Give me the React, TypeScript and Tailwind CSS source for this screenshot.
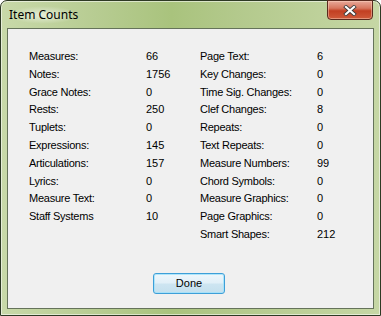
const left: [string, string][] = [
  ["Measures:", "66"],
  ["Notes:", "1756"],
  ["Grace Notes:", "0"],
  ["Rests:", "250"],
  ["Tuplets:", "0"],
  ["Expressions:", "145"],
  ["Articulations:", "157"],
  ["Lyrics:", "0"],
  ["Measure Text:", "0"],
  ["Staff Systems", "10"],
];

const right: [string, string][] = [
  ["Page Text:", "6"],
  ["Key Changes:", "0"],
  ["Time Sig. Changes:", "0"],
  ["Clef Changes:", "8"],
  ["Repeats:", "0"],
  ["Text Repeats:", "0"],
  ["Measure Numbers:", "99"],
  ["Chord Symbols:", "0"],
  ["Measure Graphics:", "0"],
  ["Page Graphics:", "0"],
  ["Smart Shapes:", "212"],
];

function Column({ rows }: { rows: [string, string][] }) {
  return (
    <div className="flex w-[171px] flex-col">
      {rows.map(([label, value]) => (
        <div key={label} className="flex h-[17.8px] items-center leading-[17.8px]">
          <span className="w-[117px] whitespace-nowrap tracking-[-0.25px]">{label}</span>
          <span>{value}</span>
        </div>
      ))}
    </div>
  );
}

function CloseButton() {
  return (
    <div className="absolute left-[326px] top-[-1px] flex h-[20px] w-[46px] items-center justify-center rounded-b-[4px] border border-[#5a2a1e] bg-[linear-gradient(180deg,#e8a99a_0%,#d7765e_40%,#c23f22_55%,#cf5a3a_100%)] shadow-[inset_0_0_0_1px_rgba(255,220,200,0.45)]">
      <svg width="14" height="11" viewBox="0 0 14 11">
        <path d="M3 2 L11 9 M11 2 L3 9" stroke="#3b3b3b" strokeWidth="3.8" strokeLinecap="square" />
        <path d="M3 2 L11 9 M11 2 L3 9" stroke="#ffffff" strokeWidth="2.2" strokeLinecap="square" />
      </svg>
    </div>
  );
}

export default function App() {
  return (
    <div className="h-[316px] w-[381px] font-['Liberation_Sans',Arial,sans-serif] text-[11px] text-black">
      <div className="relative flex h-full w-full flex-col rounded-t-[7px] border border-[#2e3a24] bg-[linear-gradient(90deg,#c8d9a9_0%,#b7cc92_25%,#a9c37d_45%,#b3c98c_62%,#c6d7a5_100%)] px-[6px] pb-[6px] shadow-[inset_0_0_0_1px_rgba(255,255,255,0.55)]">
        <div className="flex h-[27px] items-center pl-[1px] pt-[1px]">
          <span className="rounded-full bg-[radial-gradient(ellipse_at_center,rgba(255,255,255,0.6)_0%,rgba(255,255,255,0)_70%)] px-[1px] font-['Noto_Sans',sans-serif] text-[12px] text-black">
            Item Counts
          </span>
        </div>
        <CloseButton />
        <div className="flex flex-1 flex-col border border-[#65735a] bg-[#f0f0f0]">
          <div className="flex pl-[21px] pt-[19px]">
            <Column rows={left} />
            <Column rows={right} />
          </div>
          <div className="mt-auto pb-[14px] pl-[145px]">
            <button className="flex h-[21px] w-[72px] items-center justify-center rounded-[3px] border border-[#3d9fd8] bg-[linear-gradient(180deg,#eef7fc_0%,#e2f0f8_45%,#cde5f1_55%,#c4e0ee_100%)] shadow-[inset_0_0_0_1px_rgba(160,225,250,0.8)]">
              Done
            </button>
          </div>
        </div>
      </div>
    </div>
  );
}
